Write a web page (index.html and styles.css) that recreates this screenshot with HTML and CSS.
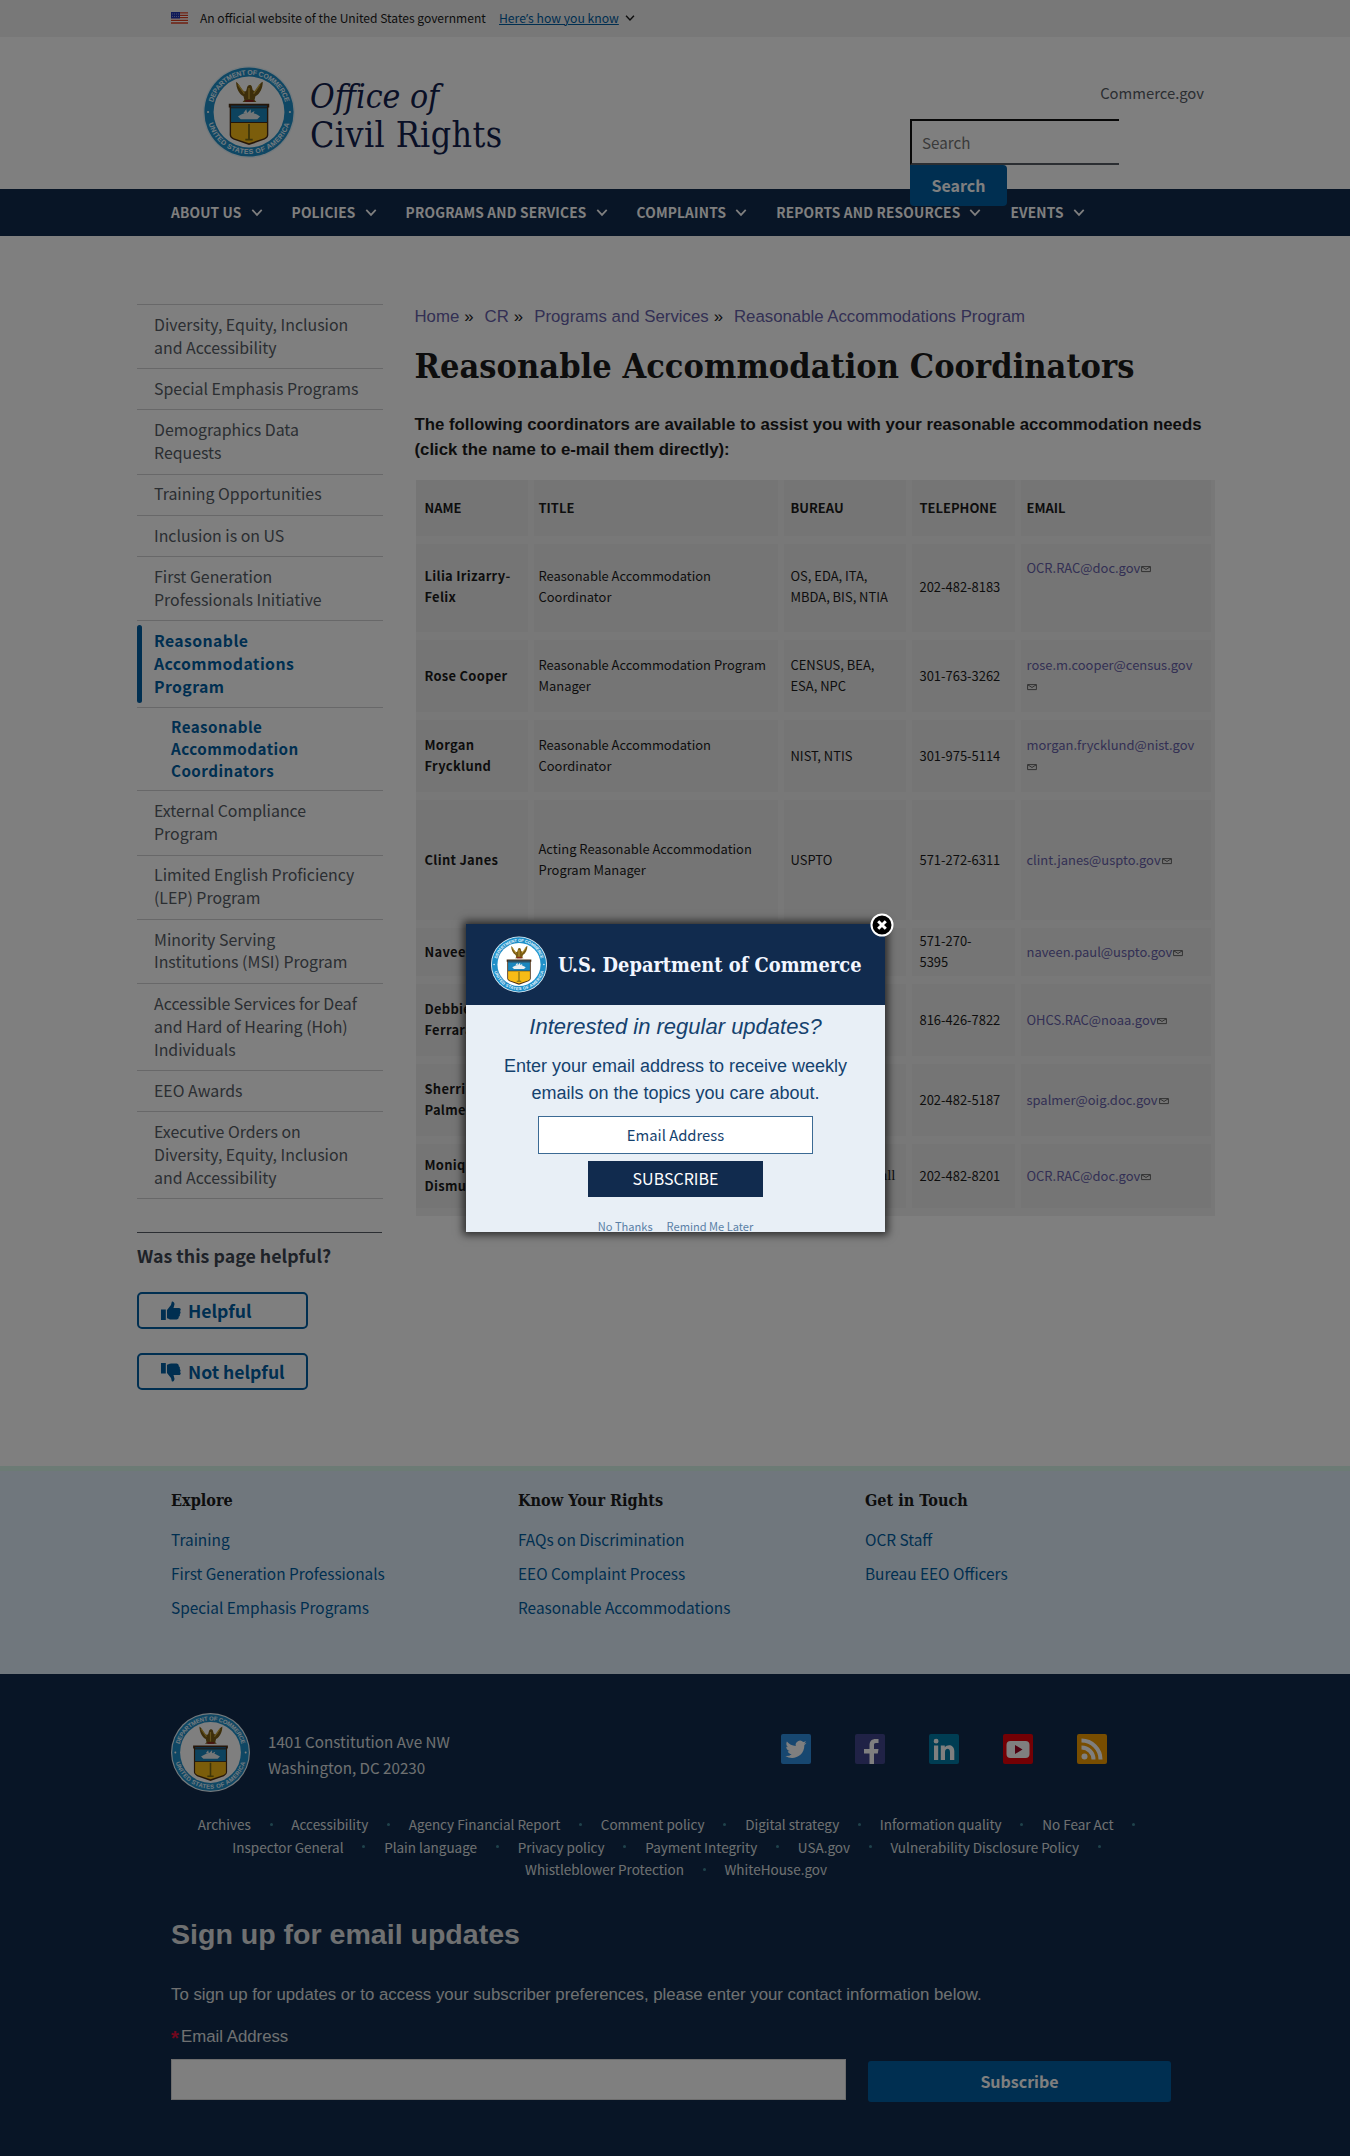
FILE: index.html
```html
<!DOCTYPE html>
<html lang="en">
<head>
<meta charset="utf-8">
<title>Reasonable Accommodation Coordinators</title>
<link rel="stylesheet" href="styles.css">
</head>
<body>
<svg class="defs" width="0" height="0" aria-hidden="true">
  <symbol id="seal" viewBox="0 0 100 100">
    <circle cx="50" cy="50" r="50" fill="#e8f4fa"/>
    <circle cx="50" cy="50" r="48.5" fill="#1f8fc8"/>
    <circle cx="50" cy="50" r="38.5" fill="#fff"/>
    <path id="arc-top" d="M9.5 50a40.500 40.500 0 0 1 81 0" fill="none"/>
    <path id="arc-bottom" d="M4.300 50a45.700 45.700 0 0 0 91.400 0" fill="none"/>
    <text class="seal-text"><textPath href="#arc-top" startOffset="50%" text-anchor="middle" textLength="106">DEPARTMENT OF COMMERCE</textPath></text>
    <text class="seal-text"><textPath href="#arc-bottom" startOffset="50%" text-anchor="middle" textLength="118">UNITED STATES OF AMERICA</textPath></text>
    <circle cx="5.500" cy="50" r="1.200" fill="#fff"/><circle cx="94.500" cy="50" r="1.200" fill="#fff"/>
    <path d="M36 17c2 1 4 5 6 8 2 3 4 3 5 2l1-4c1-3 4-3 5-1l1 4c2 2 4 1 5-1 2-4 3-7 6-8 0 7-3 13-8 16l-1 4 2 2H43l2-2-1-4c-5-3-8-9-8-16z" fill="#7a5c14"/>
    <path d="M38 20l7 10M62 20l-7 10M50 24v12" stroke="#c9a53a" stroke-width="1.500" fill="none"/>
    <path d="M46 38h9" stroke="#8f2020" stroke-width="2"/>
    <path d="M28 41h44v4h-1v30q0 3-4 5l-17 6-17-6q-4-2-4-5V45h-1z" fill="#4a2d12"/>
    <path d="M30.500 46h39v15h-39z" fill="#1a86bd"/>
    <path d="M30.500 43h39v2h-39z" fill="#1d5f8c"/>
    <path d="M30.500 62h39v13q0 2-3 3.500L50 84l-16.500-5.500q-3-1.500-3-3.500z" fill="#f7bb16"/>
    <path d="M38 55q12-9 24 0l-3 3H41zM44 51l3-4 1 4 4-4v4l4-2-1 3z" fill="#e9eef0"/>
    <path d="M50 63v17M46 80h8" stroke="#7a6a14" stroke-width="2"/>
  </symbol>
  <symbol id="chev" viewBox="0 0 14 10"><path d="M1.500 2L7 7.800 12.500 2" fill="none" stroke="currentColor" stroke-width="2"/></symbol>
  <symbol id="mail" viewBox="0 0 10 8"><path d="M.6 1.600h8.800v5H.6zM.8 1.800L5 4.500l4.200-2.700" fill="none" stroke="#555" stroke-width=".9"/></symbol>
  <symbol id="thumb" viewBox="0 0 20 20"><path d="M0 8.500h4.800V19H0zM6 9l4-5 .8-3.300C11 0 13.500.5 13.500 3.200L12.500 7H18c1.800 0 2.300 2 1 3 1 1 .6 2.500-.3 3 .6 1.200 0 2.300-1 2.700.3 1.600-.7 2.800-2.200 2.800H10c-1.700 0-2.500-1-4-1.300z" fill="currentColor"/></symbol>
</svg>

<div class="banner">
  <svg class="flag" viewBox="0 0 17 12"><path fill="#fff" d="M0 0h17v12H0z"/><path d="M0 .9h17M0 3.300h17M0 5.700h17M0 8.300h17M0 11h17" stroke="#db3e1f" stroke-width="1.300"/><path fill="#1e33b1" d="M0 0h9v6.500H0z"/><path d="M1 2h7M1 4.500h7" stroke="#8b95d8" stroke-dasharray="1 1"/></svg>
  <span class="banner-text">An official website of the United States government</span>
  <a class="banner-link">Here<span class="apos">’</span>s how you know</a>
  <svg class="banner-chev"><use href="#chev"/></svg>
</div>

<header class="header">
  <svg class="logo"><use href="#seal"/></svg>
  <div class="site-name"><i class="site-of">Office of</i><span class="site-cr">Civil Rights</span></div>
  <div class="tools">
    <a class="commerce">Commerce.gov</a>
    <div class="search-box">Search</div>
    <div class="search-btn">Search</div>
  </div>
</header>

<nav class="nav">
  <a>ABOUT US<svg><use href="#chev"/></svg></a>
  <a>POLICIES<svg><use href="#chev"/></svg></a>
  <a>PROGRAMS AND SERVICES<svg><use href="#chev"/></svg></a>
  <a>COMPLAINTS<svg><use href="#chev"/></svg></a>
  <a>REPORTS AND RESOURCES<svg><use href="#chev"/></svg></a>
  <a>EVENTS<svg><use href="#chev"/></svg></a>
</nav>

<div class="page">
  <aside class="side">
    <ul class="sidenav">
      <li>Diversity, Equity, Inclusion<br>and Accessibility</li>
      <li>Special Emphasis Programs</li>
      <li>Demographics Data<br>Requests</li>
      <li>Training Opportunities</li>
      <li>Inclusion is on US</li>
      <li>First Generation<br>Professionals Initiative</li>
      <li class="current">Reasonable<br>Accommodations<br>Program</li>
      <li class="sub">Reasonable<br>Accommodation<br>Coordinators</li>
      <li>External Compliance<br>Program</li>
      <li>Limited English Proficiency<br>(LEP) Program</li>
      <li>Minority Serving<br>Institutions (MSI) Program</li>
      <li>Accessible Services for Deaf<br>and Hard of Hearing (Hoh)<br>Individuals</li>
      <li>EEO Awards</li>
      <li>Executive Orders on<br>Diversity, Equity, Inclusion<br>and Accessibility</li>
    </ul>
    <div class="feedback">
      <div class="question">Was this page helpful?</div>
      <div class="vote"><svg><use href="#thumb"/></svg>Helpful</div>
      <div class="vote down"><svg><use href="#thumb"/></svg>Not helpful</div>
    </div>
  </aside>
  <main class="main">
    <div class="crumbs"><a>Home</a><b>»</b><a>CR</a><b>»</b><a>Programs and Services</a><b>»</b><a>Reasonable Accommodations Program</a></div>
    <h1>Reasonable Accommodation Coordinators</h1>
    <p class="intro">The following coordinators are available to assist you with your reasonable accommodation needs<br>(click the name to e-mail them directly):</p>
    <table class="coords">
      <colgroup><col class="c1"><col class="c2"><col class="c3"><col class="c4"><col class="c5"></colgroup>
      <tr class="h64"><th>NAME</th><th>TITLE</th><th>BUREAU</th><th>TELEPHONE</th><th>EMAIL</th></tr>
      <tr class="h96"><th>Lilia Irizarry-<br>Felix</th><td>Reasonable Accommodation<br>Coordinator</td><td>OS, EDA, ITA,<br>MBDA, BIS, NTIA</td><td>202-482-8183</td><td class="top"><a>OCR.RAC@doc.gov</a><svg class="mail"><use href="#mail"/></svg></td></tr>
      <tr class="h80"><th>Rose Cooper</th><td>Reasonable Accommodation Program<br>Manager</td><td>CENSUS, BEA,<br>ESA, NPC</td><td>301-763-3262</td><td><a>rose.m.cooper@census.gov</a><br><svg class="mail"><use href="#mail"/></svg></td></tr>
      <tr class="h80"><th>Morgan<br>Frycklund</th><td>Reasonable Accommodation<br>Coordinator</td><td>NIST, NTIS</td><td>301-975-5114</td><td><a>morgan.frycklund@nist.gov</a><br><svg class="mail"><use href="#mail"/></svg></td></tr>
      <tr class="h128"><th>Clint Janes</th><td>Acting Reasonable Accommodation<br>Program Manager</td><td>USPTO</td><td>571-272-6311</td><td><a>clint.janes@uspto.gov</a><svg class="mail"><use href="#mail"/></svg></td></tr>
      <tr class="h56"><th>Naveen Paul</th><td></td><td></td><td>571-270-<br>5395</td><td><a>naveen.paul@uspto.gov</a><svg class="mail"><use href="#mail"/></svg></td></tr>
      <tr class="h80"><th>Debbie<br>Ferrara</th><td></td><td></td><td>816-426-7822</td><td><a>OHCS.RAC@noaa.gov</a><svg class="mail"><use href="#mail"/></svg></td></tr>
      <tr class="h80"><th>Sherri<br>Palmer</th><td></td><td></td><td>202-482-5187</td><td><a>spalmer@oig.doc.gov</a><svg class="mail"><use href="#mail"/></svg></td></tr>
      <tr class="h72"><th>Monique<br>Dismuke</th><td></td><td class="tail">all</td><td>202-482-8201</td><td><a>OCR.RAC@doc.gov</a><svg class="mail"><use href="#mail"/></svg></td></tr>
    </table>
  </main>
</div>

<section class="links">
  <div><h4>Explore</h4><a>Training</a><a>First Generation Professionals</a><a>Special Emphasis Programs</a></div>
  <div><h4>Know Your Rights</h4><a>FAQs on Discrimination</a><a>EEO Complaint Process</a><a>Reasonable Accommodations</a></div>
  <div><h4>Get in Touch</h4><a>OCR Staff</a><a>Bureau EEO Officers</a></div>
</section>

<footer class="footer">
  <div class="contact">
    <svg class="foot-seal"><use href="#seal"/></svg>
    <div class="address">1401 Constitution Ave NW<br>Washington, DC 20230</div>
    <div class="social">
      <svg viewBox="0 0 30 30"><rect width="30" height="30" rx="2" fill="#2f8fe0"/><path d="M25.500 8.700c-.8.400-1.600.6-2.500.7.900-.5 1.600-1.400 1.900-2.400-.8.500-1.800.9-2.700 1.100a4.300 4.300 0 0 0-7.400 3.900c-3.600-.2-6.800-1.900-8.900-4.500-1.100 2-.6 4.500 1.300 5.800-.7 0-1.400-.2-2-.5 0 2.100 1.500 3.800 3.500 4.300-.6.200-1.300.2-2 .1.600 1.700 2.200 2.900 4 3a8.700 8.700 0 0 1-6.300 1.800c6.900 4.400 18.900 1.200 19-11 .8-.6 1.600-1.400 2.100-2.300z" fill="#fff"/></svg>
      <svg viewBox="0 0 30 30"><rect width="30" height="30" rx="2" fill="#40458c"/><path d="M14.500 30V19.500H9V15h5.500v-3.500C14.500 7 17 5 20.500 5H23.500v4h-2.500c-1.700 0-2 .8-2 2.200V15h4.500l-.7 4.500H19V30z" fill="#fff"/></svg>
      <svg viewBox="0 0 30 30"><rect width="30" height="30" rx="2" fill="#007ba6"/><path d="M5 11.500h4.200V26H5zM7.100 4.700a2.400 2.400 0 1 1 0 4.900 2.400 2.400 0 0 1 0-4.900zM11.800 11.500h4v2c1.900-3.600 9.500-3.500 9.500 3.500v9H21v-8c0-4.500-5-4-5 0v8h-4.200z" fill="#fff"/></svg>
      <svg viewBox="0 0 30 30"><rect width="30" height="30" rx="2" fill="#e60008"/><rect x="3.500" y="7" width="23" height="17" rx="4" fill="#fff"/><path d="M12 11l7.500 4.500L12 20z" fill="#a00020"/></svg>
      <svg viewBox="0 0 30 30"><rect width="30" height="30" rx="2" fill="#f09a00"/><circle cx="7.500" cy="22.500" r="3" fill="#fff"/><path d="M4.500 13.500a12 12 0 0 1 12 12M4.500 6.500a19 19 0 0 1 19 19" fill="none" stroke="#fff" stroke-width="4"/></svg>
    </div>
  </div>
  <div class="rows">
    <div><a>Archives</a><i></i><a>Accessibility</a><i></i><a>Agency Financial Report</a><i></i><a>Comment policy</a><i></i><a>Digital strategy</a><i></i><a>Information quality</a><i></i><a>No Fear Act</a><i></i></div>
    <div><a>Inspector General</a><i></i><a>Plain language</a><i></i><a>Privacy policy</a><i></i><a>Payment Integrity</a><i></i><a>USA.gov</a><i></i><a>Vulnerability Disclosure Policy</a><i></i></div>
    <div><a>Whistleblower Protection</a><i></i><a>WhiteHouse.gov</a></div>
  </div>
  <h2>Sign up for email updates</h2>
  <p class="signup">To sign up for updates or to access your subscriber preferences, please enter your contact information below.</p>
  <div class="label"><em>*</em>Email Address</div>
  <div class="form"><div class="field"></div><div class="subscribe">Subscribe</div></div>
</footer>

<div class="overlay"></div>
<div class="modal">
  <div class="modal-head"><svg class="modal-seal"><use href="#seal"/></svg><span>U.S. Department of Commerce</span></div>
  <div class="modal-body">
    <div class="modal-title">Interested in regular updates?</div>
    <div class="modal-text">Enter your email address to receive weekly<br>emails on the topics you care about.</div>
    <div class="modal-input">Email Address</div>
    <div class="modal-btn">SUBSCRIBE</div>
    <div class="modal-links"><a>No Thanks</a><a>Remind Me Later</a></div>
  </div>
</div>
<svg class="close" viewBox="0 0 26 26"><circle cx="13" cy="13" r="10.500" fill="#000" stroke="#fff" stroke-width="2"/><path d="M9.200 9.200l7.600 7.600M16.800 9.200l-7.600 7.600" stroke="#fff" stroke-width="3"/></svg>
</body>
</html>
```
FILE: styles.css
```css
* { box-sizing: border-box; }
body {
  margin: 0; width: 1350px; height: 2156px; position: relative; overflow: hidden;
  background: #fff; color: #1b1b1b;
  font-family: "Noto Sans CJK SC", sans-serif; font-size: 15.200px;
}
svg { display: block; flex: none; }
.defs { position: absolute; }
.seal-text { font: bold 7.500px "Liberation Sans", sans-serif; fill: #e8f6ff; }
a, .banner-text, .nav a, .commerce { white-space: nowrap; }

.banner { height: 37px; background: #f0f0f0; display: flex; align-items: center; padding: 0 0 1px 171px; font-size: 12.050px; line-height: 16px; }
.flag { width: 17px; height: 12px; }
.banner-text { width: 287px; margin-left: 12px; }
.banner-link { width: 121px; margin-left: 12px; color: #005ea2; text-decoration: underline; font-size: 12.200px; }
.apos { font-family: "Open Sans", sans-serif; }
.banner-chev { width: 10px; height: 8px; margin-left: 5px; }

.header { height: 152px; display: flex; align-items: flex-start; padding-left: 203px; }
.logo { width: 92px; height: 92px; margin-top: 29px; }
.site-name { margin: 41px 0 0 15px; width: 300px; display: flex; flex-direction: column; font-family: "DejaVu Serif Condensed", "DejaVu Serif", serif; font-stretch: condensed; line-height: 38px; color: #12204d; }
.site-of { font-size: 33.500px; }
.site-cr { font-size: 35.500px; letter-spacing: .4px; }
.tools { margin-left: 300px; width: 294px; position: relative; z-index: 1; }
.commerce { display: block; text-align: right; margin-top: 45px; line-height: 22px; color: #565c65; font-size: 14.800px; }
.search-box { margin-top: 15px; width: 209px; height: 46px; border: 2px solid #111; border-bottom-color: #565c65; border-right: 0; padding-left: 10px; line-height: 42px; color: #757575; }
.search-btn { width: 97px; height: 41px; border-radius: 0 4px 4px 4px; background: #005ea2; color: #fff; font-weight: bold; font-size: 16px; line-height: 41px; text-align: center; }

.nav { height: 47px; background: #112a4c; display: flex; align-items: center; padding: 0 0 1px 171px; gap: 29px; color: #fff; font-weight: bold; font-size: 13.700px; letter-spacing: .18px; }
.nav a { display: flex; align-items: center; gap: 9px; }
.nav svg { width: 12px; height: 9px; }

.page { display: flex; height: 1230px; padding: 68px 0 0 137px; }
.side { width: 246px; }
.sidenav { list-style: none; margin: 0; padding: 0; border-bottom: 1px solid #d0d1d2; }
.sidenav li { border-top: 1px solid #d0d1d2; padding: 8.800px 0 8.550px 17px; line-height: 22.900px; font-size: 15.900px; color: #565c65; white-space: nowrap; }
.sidenav .current { color: #005ea2; font-weight: bold; position: relative; font-size: 15.800px; letter-spacing: .4px; }
.current::before { content: ""; position: absolute; left: 0; top: 4px; bottom: 4px; width: 5px; border-radius: 3px; background: #005ea2; }
.sidenav .sub { color: #005ea2; font-weight: bold; font-size: 15.200px; letter-spacing: .45px; line-height: 22px; padding: 6.500px 0 9.700px 34px; }
.feedback { margin-top: 33px; border-top: 1.500px solid #565c65; width: 245px; }
.question { font-weight: bold; font-size: 17.800px; line-height: 24px; margin: 10px 0 25px; color: #3d4551; white-space: nowrap; }
.vote { width: 171px; height: 37px; border: 2px solid #005ea2; border-radius: 5px; margin-bottom: 24px; display: flex; align-items: center; padding-left: 22px; gap: 7px; color: #005ea2; font-weight: bold; font-size: 17.600px; line-height: 30px; }
.vote svg { width: 20px; height: 20px; }
.down svg { transform: rotate(180deg) scaleX(-1); }

.main { margin-left: 31.500px; width: 810px; font-family: "Liberation Sans", Arial, sans-serif; font-size: 16.800px; }
.crumbs { display: flex; padding-top: 1px; line-height: 24px; color: #6660a8; }
.crumbs b { color: #1b1b1b; font-weight: normal; margin: 0 11px 0 5px; }
h1 { margin: 21px 0 0; font-family: "DejaVu Serif Condensed", "DejaVu Serif", serif; font-stretch: condensed; font-size: 34px; letter-spacing: .04px; line-height: 32px; color: #1b1b1b; white-space: nowrap; }
.intro { margin: 30px 0 17px; font-weight: bold; line-height: 25.400px; white-space: nowrap; }
.coords { margin-left: 1px; width: 799px; table-layout: fixed; border-collapse: separate; border-spacing: 0; font-family: "Noto Sans CJK SC", sans-serif; font-size: 12.950px; line-height: 21.500px; background: #f1f1f1; }
.c1 { width: 118px; } .c2 { width: 250px; } .c3 { width: 128px; } .c4 { width: 109px; } .c5 { width: 194px; }
.coords th, .coords td { background: #ebebeb; background-clip: padding-box; border-right: 6px solid #f1f1f1; border-bottom: 8px solid #f1f1f1; padding: 0 0 1px 9px; text-align: left; vertical-align: middle; white-space: nowrap; }
.coords tr + tr th { letter-spacing: .3px; }
.coords .h96 > * { padding-bottom: 3px; }
.coords tr > :nth-child(2) { padding-left: 5px; }
.coords tr > :nth-child(3) { padding-left: 7px; }
.coords tr > :nth-child(4) { padding-left: 8px; }
.coords tr > :nth-child(5) { padding-left: 6px; border-right-width: 4px; }
.coords .top { vertical-align: top; padding-top: 13px; }
.coords .tail { font-family: "Liberation Serif", serif; font-size: 15px; text-align: right; padding-right: 10px; }
.coords a { color: #6660a8; }
.coords a + .mail { margin-left: 1px; }
.mail { display: inline-block; width: 10px; height: 8px; }
.h64 { height: 64px; } .h96 { height: 96px; } .h80 { height: 80px; } .h128 { height: 128px; } .h56 { height: 56px; } .h72 { height: 72px; }

.links { height: 208px; background: #e0eefa; border-top: 5px solid #d9f7ea; display: flex; padding: 16px 0 0 171px; }
.links div { width: 347px; display: flex; flex-direction: column; }
h4 { margin: 0 0 7px; font: bold 16.100px/28px "DejaVu Serif Condensed", "DejaVu Serif", serif; font-stretch: condensed; }
.links a { color: #005ea2; line-height: 34px; font-size: 15.400px; }

.footer { height: 482px; background: #112a4c; color: #dfe1e2; padding: 39px 0 0 171px; }
.contact { display: flex; height: 80px; }
.foot-seal { width: 79px; height: 79px; }
.address { margin: 15px 0 0 18px; width: 513px; line-height: 26px; }
.social { display: flex; gap: 44px; margin-top: 21px; }
.social svg { width: 30px; height: 30px; }
.rows { margin: 20px 0 0 -169px; font-size: 13.500px; line-height: 22.600px; }
.rows div { display: flex; justify-content: center; align-items: center; }
.rows i { width: 3px; height: 3px; margin: 0 18.800px; border-radius: 50%; background: #3f8597; }
h2 { margin: 35px 0 0; font: bold 28.550px/36px "Liberation Sans", Arial, sans-serif; }
.signup, .label { font: 16.800px/26px "Liberation Sans", Arial, sans-serif; }
.signup { margin: 30px 0 16px; }
.label em { color: #e0103c; font-style: normal; font-weight: bold; font-size: 20px; line-height: 20px; display: inline-block; width: 10px; position: relative; top: 3px; }
.form { display: flex; margin-top: 9px; gap: 22px; }
.field { width: 675px; height: 41px; background: #fff; border: 1px solid #dadada; }
.subscribe { width: 303px; height: 41px; margin-top: 2px; border-radius: 3px; background: #005ea2; text-align: center; font-weight: bold; font-size: 16px; line-height: 41px; color: #fff; }

.overlay { position: absolute; inset: 0; background: rgba(0, 0, 0, .5); z-index: 2; }
.modal { position: absolute; z-index: 3; left: 466px; top: 924px; width: 419px; height: 308px; overflow: hidden; background: #e8eff6; box-shadow: 0 0 8px 3px rgba(0, 0, 0, .65); color: #15426e; text-align: center; }
.modal-head { height: 81px; background: #112b4e; display: flex; align-items: center; padding-left: 25px; gap: 11px; }
.modal-seal { width: 56px; height: 57px; }
.modal-head span { color: #f2f6ff; font: bold 19.850px/30px "DejaVu Serif Condensed", "DejaVu Serif", serif; font-stretch: condensed; white-space: nowrap; }
.modal-body { display: flex; flex-direction: column; align-items: center; }
.modal-title { margin-top: 8px; font: italic 22px/28px "Liberation Sans", Arial, sans-serif; }
.modal-text { margin-top: 12px; font: 18px/27px "Liberation Sans", Arial, sans-serif; }
.modal-input { margin-top: 9px; width: 275px; height: 38px; border: 1px solid #3b6a94; background: #fff; font-size: 14.800px; line-height: 36px; }
.modal-btn { margin-top: 7px; width: 175px; height: 36px; background: #112b4e; color: #fff; font-size: 16px; line-height: 35px; }
.modal-links { display: flex; gap: 14px; margin-top: 19px; font-size: 11.100px; line-height: 20px; color: #5a7fa6; }
.close { position: absolute; z-index: 4; left: 869px; top: 912px; width: 26px; height: 26px; }
```
